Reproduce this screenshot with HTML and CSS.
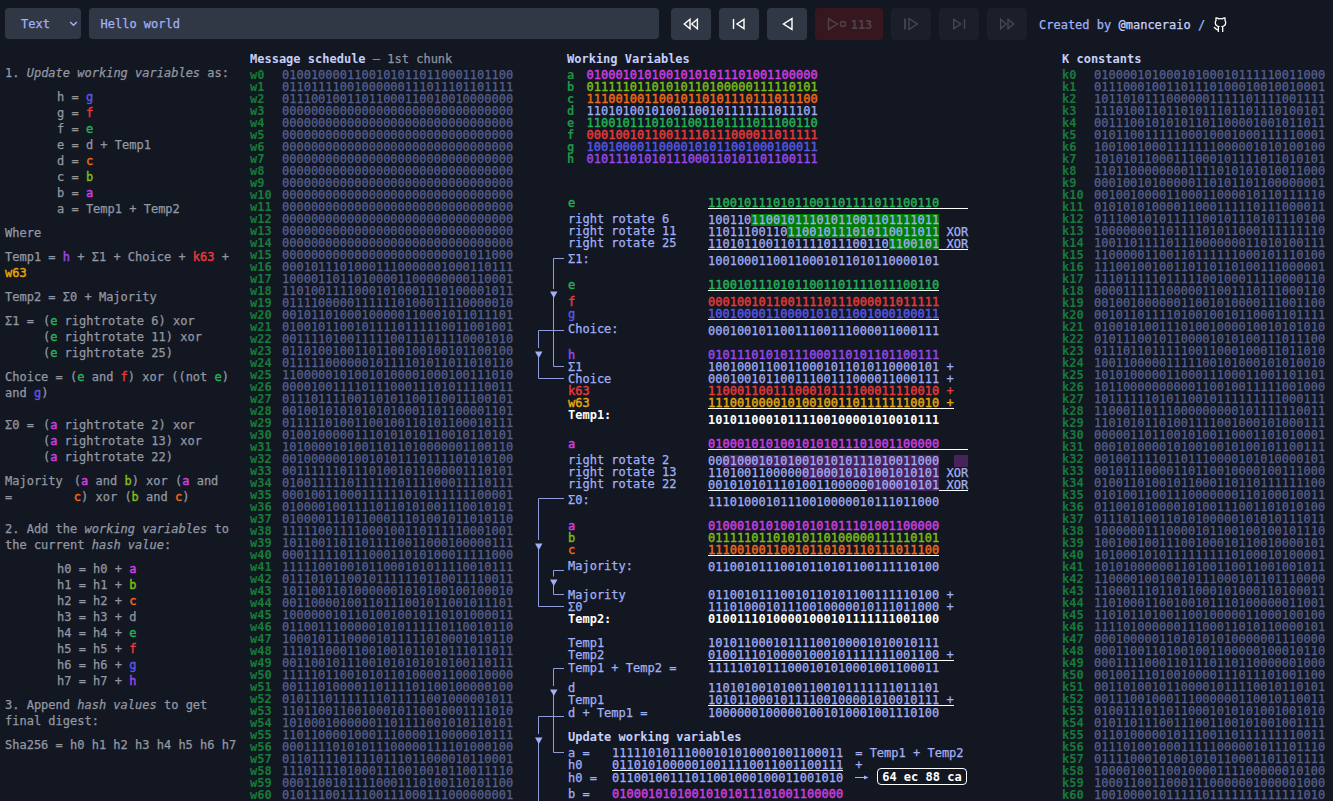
FILE: index.html
```html
<!DOCTYPE html>
<html lang="en">
<head>
<meta charset="utf-8">
<title>Sha256 Algorithm Explained</title>
<link rel="stylesheet" href="styles.css">
</head>
<body>
<header class="toolbar">
  <div class="select"><span>Text</span>
    <svg width="9" height="6" viewBox="0 0 9 6"><path d="M1.200 1l3.300 3.300L7.800 1"/></svg>
  </div>
  <div class="input">Hello world</div>
  <nav class="controls">
    <button class="btn"><svg width="16" height="14" viewBox="0 0 16 14"><path d="M7 2.300v9.400L1.300 7zM14.400 2.300v9.400L8.700 7z"/></svg></button>
    <button class="btn"><svg width="16" height="14" viewBox="0 0 16 14"><path d="M2.500 2v10M13 2.300v9.400L6 7z"/></svg></button>
    <button class="btn"><svg width="16" height="14" viewBox="0 0 16 14"><path d="M13 1.600v10.800L4.500 7z"/></svg></button>
    <button class="btn stop"><svg width="20" height="14" viewBox="0 0 20 14"><path d="M1.500 1.600v10.800L10.300 7z"/><circle cx="15.800" cy="7" r="2.500"/></svg><span>113</span></button>
    <button class="btn off"><svg width="16" height="14" viewBox="0 0 16 14"><path d="M2 1.500v11" stroke-width="1.800"/><path d="M6 1.600v10.800L14.200 7z"/></svg></button>
    <button class="btn off"><svg width="16" height="14" viewBox="0 0 16 14"><path d="M2.700 2.300v9.400l7-4.700zM13.500 2v10"/></svg></button>
    <button class="btn off"><svg width="16" height="14" viewBox="0 0 16 14"><path d="M1.700 2.300v9.400l5.500-4.700zM9 2.300v9.400l5.500-4.700z"/></svg></button>
  </nav>
  <div class="credit">Created by <b>@manceraio</b> / <svg width="15" height="15" viewBox="0 0 15 15"><path d="M5.300 15v-4.200c0-.5.200-.9.500-1.200C3.900 9.300 2.300 8.300 2.300 5.600c0-.9.300-1.600.8-2.200-.3-.8-.3-1.700 0-2.600 1 0 1.900.4 2.500 1a8.500 8.500 0 0 1 3.800 0c.6-.6 1.500-1 2.500-1 .3.900.3 1.800 0 2.600.5.600.8 1.300.8 2.200 0 2.700-1.600 3.700-3.500 4 .3.300.5.700.5 1.200V15M5.300 12.600c-2.300.6-2.400-.8-3.200-1.500-.4-.5-.8-.7-1.300-.8"/></svg></div>
</header>

<main class="board">
  <section class="notes">
    <p>1. <i>Update working variables</i> as:</p>
    <div class="indent">
      <div>h = <span class="g">g</span></div>
      <div>g = <span class="f">f</span></div>
      <div>f = <span class="e">e</span></div>
      <div>e = d + Temp1</div>
      <div>d = <span class="c">c</span></div>
      <div>c = <span class="b">b</span></div>
      <div>b = <span class="a">a</span></div>
      <div>a = Temp1 + Temp2</div>
    </div>
    <p>Where</p>
    <p>Temp1 = <span class="h">h</span> + Σ1 + Choice + <span class="f">k63</span> + <span class="w">w63</span></p>
    <p>Temp2 = Σ0 + Majority</p>
    <div class="formula"><span>Σ1 =</span>
      <div>(<span class="e">e</span> rightrotate 6) xor<br>(<span class="e">e</span> rightrotate 11) xor<br>(<span class="e">e</span> rightrotate 25)</div>
    </div>
    <p>Choice = (<span class="e">e</span> and <span class="f">f</span>) xor ((not <span class="e">e</span>) and <span class="g">g</span>)</p>
    <div class="formula spaced"><span>Σ0 =</span>
      <div>(<span class="a">a</span> rightrotate 2) xor<br>(<span class="a">a</span> rightrotate 13) xor<br>(<span class="a">a</span> rightrotate 22)</div>
    </div>
    <div class="formula majority"><span>Majority<br>=</span>
      <div>(<span class="a">a</span> and <span class="b">b</span>) xor (<span class="a">a</span> and<br><span class="c">c</span>) xor (<span class="b">b</span> and <span class="c">c</span>)</div>
    </div>
    <p class="step">2. Add the <i>working variables</i> to the current <i>hash value</i>:</p>
    <div class="indent">
      <div>h0 = h0 + <span class="a">a</span></div>
      <div>h1 = h1 + <span class="b">b</span></div>
      <div>h2 = h2 + <span class="c">c</span></div>
      <div>h3 = h3 + d</div>
      <div>h4 = h4 + <span class="e">e</span></div>
      <div>h5 = h5 + <span class="f">f</span></div>
      <div>h6 = h6 + <span class="g">g</span></div>
      <div>h7 = h7 + <span class="h">h</span></div>
    </div>
    <p>3. Append <i>hash values</i> to get final digest:</p>
    <p>Sha256 = h0 h1 h2 h3 h4 h5 h6 h7</p>
  </section>

  <section class="schedule">
    <h2>Message schedule <span>– 1st chunk</span></h2>
    <div id="schedule"></div>
  </section>

  <section class="work">
    <h2>Working Variables</h2>
    <div id="vars"></div>
    <div class="steps">
      <svg class="links" width="32" height="604" viewBox="0 0 32 604">
        <path class="line" d="M29 61.500H18.500V92M18.500 95V169.500H29"/>
        <path class="line" d="M29 133.500H3.500V151M3.500 155V181.500H29"/>
        <path class="line" d="M29 301.500H3.500V343M3.500 347V409.500H29"/>
        <path class="line" d="M29 373.500H18.500V379.500M18.500 383V397.500H29"/>
        <path class="line" d="M29 471.500H18.500V489M18.500 493V555.500H29"/>
        <path class="line" d="M29 519.500H3.500V537M3.500 541V604"/>
        <path d="M15 94.500h7.500l-3.700 6.500z"/>
        <path d="M0 154.500h7.500l-3.700 6.500z"/>
        <path d="M0 346.500h7.500l-3.700 6.500z"/>
        <path d="M15 382.500h7.500l-3.700 6.500z"/>
        <path d="M15 492.500h7.500l-3.700 6.500z"/>
        <path d="M0 540.500h7.500l-3.700 6.500z"/>
      </svg>
      <div class="calc">
        <div class="pair">
          <div class="labels" id="labels"></div>
          <div class="values" id="values"></div>
        </div>
        <h3>Update working variables</h3>
        <div class="update" id="update"></div>
      </div>
    </div>
  </section>

  <section class="constants">
    <h2>K constants</h2>
    <div id="constants"></div>
  </section>
</main>
<script src="script.js"></script>
</body>
</html>
```
FILE: styles.css
```css
* { box-sizing: border-box; }

body {
  margin: 0;
  height: 801px;
  overflow: hidden;
  background: #131722;
  color: #a2b0f6;
  font: 12px/12px "DejaVu Sans Mono", Menlo, monospace;
  -webkit-text-stroke: 0.25px currentColor;
}

/* toolbar */
.toolbar {
  display: flex;
  align-items: flex-start;
  height: 48px;
  padding: 8px 5px 0;
}
.select, .input {
  display: flex;
  align-items: center;
  height: 31px;
  border-radius: 4px;
  background: #303846;
}
.select {
  justify-content: space-between;
  width: 76px;
  margin-right: 8px;
  padding: 0 3px 0 16px;
}
.input { width: 570px; padding-left: 11.5px; }
.controls { display: flex; gap: 8px; margin-left: 12px; }
.btn {
  display: flex;
  align-items: center;
  justify-content: center;
  width: 40px;
  height: 32px;
  padding: 0;
  border: 0;
  border-radius: 4px;
  background: #303846;
  color: #fff;
  font: inherit;
}
.btn.off { background: #1a1f2a; color: #434852; }
.btn.stop { width: 68px; gap: 4px; padding-left: 1px; background: #36161f; color: #504249; font-weight: bold; }
.btn.stop span { padding-top: 1px; -webkit-text-stroke: 0; }
svg { fill: none; stroke: currentColor; stroke-width: 1.4; flex: none; }
.credit { display: flex; align-items: center; height: 34px; margin-left: 12px; white-space: pre; }
.credit b { font-weight: normal; color: #c7d2fb; }
.credit svg { margin: 0 0 2px 1px; color: #fff; stroke-width: 1.3; }

/* columns */
.board {
  display: grid;
  grid-template-columns: 245px 285px 527px 271px;
  height: 753px;
  padding-left: 5px;
  overflow: hidden;
}
h2, h3 { margin: 0; font: inherit; font-weight: bold; color: #c5cff9; -webkit-text-stroke: 0; }
h2 { height: 16px; margin-top: 5px; line-height: 12px; white-space: pre; }
h2 span { font-weight: normal; color: #8e939d; -webkit-text-stroke: 0.25px currentColor; }

/* notes */
.notes { width: 236px; padding-top: 17px; line-height: 16px; color: #9297a2; }
.notes p { margin: 0 0 8px; }
.indent { margin: 0 0 8px; padding-left: 52px; }
.formula { display: flex; gap: 9px; margin-bottom: 8px; white-space: nowrap; }
.formula.spaced { margin-top: 24px; }
.notes p + .formula.spaced { margin-top: 16px; }
.formula.majority { gap: 11px; }
.notes .step { margin-top: 16px; }

/* word tables */
.word { display: flex; height: 12px; white-space: pre; }
.word b { width: 32px; color: #177a39; -webkit-text-stroke: 0; }
.word span { color: #566190; }
.work .word b { width: 19.5px; color: #1a9642; }

.a, .word .a { color: #cf3fe3; }
.b, .word .b { color: #7dbd18; }
.c, .word .c { color: #f26a16; }
.word .d { color: #a2b0f6; }
.e, .word .e { color: #22b455; }
.f, .word .f { color: #e63b3b; }
.g, .word .g { color: #5957e6; }
.h, .word .h { color: #9a48ec; }
.w { color: #e6a80a; }
.a, .b, .c, .e, .f, .g, .h, .w { -webkit-text-stroke-width: 0.4px; }
.strong { color: #fff; font-weight: bold; -webkit-text-stroke: 0; }

/* calculation */
.work h2, #vars { margin-left: 32px; }
.steps { display: flex; margin-top: 32px; height: 604px; }
.links { width: 32px; height: 604px; margin-right: 1px; }
.links path { fill: #a2b0f6; stroke: none; }
.links .line { fill: none; stroke: #8f9cdc; stroke-width: 1; }
.pair { display: flex; }
.labels { width: 140px; }
.labels div, .values div { height: 12px; white-space: pre; }
.values div { width: max-content; min-width: 231px; }
.values .line, .update .line { border-bottom: 1px solid #fff; }
.values .wide { min-width: 260px; }
.hit-e, .hit-a { display: inline-block; height: 12px; }
.hit-e { background: #007c00; }
.hit-a { background: #482259; }
.after-1 { margin-top: 1px; }
.after-3 { margin-top: 3px; }
.after-4 { margin-top: 4px; }
.after-5 { margin-top: 5px; }
.after-8 { margin-top: 8px; }
.after-12 { margin-top: 12px; }
.after-14 { margin-top: 14px; }
.after-16 { margin-top: 16px; }
.after-17 { margin-top: 17px; }
h3 { margin: 12px 0 4px; height: 12px; }
.update > div { display: flex; height: 12px; white-space: pre; }
.update .name { width: 44px; }
.update .note { margin-left: 12px; }
.arrow { margin: 0 8px 0 12px; fill: #a2b0f6; stroke-width: 1; }
.badge {
  height: 17px;
  margin-top: -4px;
  padding: 2px 4px;
  border: 1px solid #fff;
  border-radius: 4px;
  color: #fff;
  font-weight: bold;
  -webkit-text-stroke: 0;
}
```
FILE: script.js
```js
const fractional = (n, root) => {
  // first 32 fractional bits of the root of n, in exact integer arithmetic
  const target = BigInt(n) << BigInt(32 * root);
  let lo = 0n, hi = 1n << 40n;
  while (lo < hi) {
    const mid = (lo + hi + 1n) >> 1n;
    if (mid ** BigInt(root) <= target) lo = mid; else hi = mid - 1n;
  }
  return Number(lo & 0xffffffffn);
};
const primes = [];
for (let n = 2; primes.length < 64; n++) if (primes.every(p => n % p)) primes.push(n);
const K = primes.map(p => fractional(p, 3));
const H = primes.slice(0, 8).map(p => fractional(p, 2));

const bin = n => (n >>> 0).toString(2).padStart(32, '0');
const rotr = (n, k) => ((n >>> k) | (n << (32 - k))) >>> 0;
const add = (...xs) => xs.reduce((s, x) => (s + x) >>> 0, 0);

const message = 'Hello world';
const bytes = new Uint8Array(64);
[...message].forEach((ch, i) => { bytes[i] = ch.charCodeAt(0); });
bytes[message.length] = 0x80;
bytes[63] = message.length * 8;
const W = [];
for (let i = 0; i < 16; i++) W.push(new DataView(bytes.buffer).getUint32(i * 4));
for (let i = 16; i < 64; i++) {
  const x = W[i - 15], y = W[i - 2];
  W.push(add(W[i - 16], rotr(x, 7) ^ rotr(x, 18) ^ (x >>> 3), W[i - 7], rotr(y, 17) ^ rotr(y, 19) ^ (y >>> 10)));
}

const round = ([a, b, c, d, e, f, g, h], i) => {
  const s1 = rotr(e, 6) ^ rotr(e, 11) ^ rotr(e, 25);
  const ch = (e & f) ^ (~e & g);
  const t1 = add(h, s1, ch, K[i], W[i]);
  const s0 = rotr(a, 2) ^ rotr(a, 13) ^ rotr(a, 22);
  const maj = (a & b) ^ (a & c) ^ (b & c);
  const t2 = add(s0, maj);
  return { s1, ch, t1, s0, maj, t2, next: [add(t1, t2), a, b, c, add(d, t1), e, f, g] };
};
let vars = H;
for (let i = 0; i < 63; i++) vars = round(vars, i).next;
const [a, b, c, d, e, f, g, h] = vars;
const r = round(vars, 63);

const put = (id, html) => { document.getElementById(id).innerHTML = html; };
const word = (name, value, cls = '') => `<div class="word"><b>${name}</b><span class="${cls}">${bin(value)}</span></div>`;
// rows below w60 / k60 fall outside the board
put('schedule', W.slice(0, 61).map((v, i) => word('w' + i, v)).join(''));
put('constants', K.slice(0, 61).map((v, i) => word('k' + i, v)).join(''));
put('vars', vars.map((v, i) => word('abcdefgh'[i], v, 'abcdefgh'[i])).join(''));

const line = ([html, cls = '']) => `<div class="${cls}">${html}</div>`;
const rot = (v, k, name) => bin(rotr(v, k)).slice(0, k) + `<span class="hit-${name}">${bin(rotr(v, k)).slice(k)}</span>`;

put('labels', [
  ['e', 'e'], ['right rotate 6', 'after-4'], ['right rotate 11'], ['right rotate 25'], ['Σ1:', 'after-4'],
  ['e', 'e after-14'], ['f', 'f after-5'], ['g', 'g'], ['Choice:', 'after-3'],
  ['h', 'h after-14'], ['Σ1'], ['Choice'], ['k63', 'f'], ['w63', 'w'], ['Temp1:', 'strong'],
  ['a', 'a after-17'], ['right rotate 2', 'after-4'], ['right rotate 13'], ['right rotate 22'], ['Σ0:', 'after-4'],
  ['a', 'a after-14'], ['b', 'b'], ['c', 'c'], ['Majority:', 'after-4'],
  ['Majority', 'after-17'], ['Σ0'], ['Temp2:', 'strong'],
  ['Temp1', 'after-12'], ['Temp2'], ['Temp1 + Temp2 =', 'after-1'],
  ['d', 'after-8'], ['Temp1'], ['d + Temp1 =', 'after-1'],
].map(line).join(''));

put('values', [
  [bin(e), 'e line wide'], [rot(e, 6, 'e'), 'after-5'], [rot(e, 11, 'e') + ' XOR'], [rot(e, 25, 'e') + ' XOR', 'line'], [bin(r.s1), 'after-5'],
  [bin(e), 'e line after-12'], [bin(f), 'f after-5'], [bin(g), 'g line'], [bin(r.ch), 'after-5'],
  [bin(h), 'h after-12'], [bin(r.s1) + ' +'], [bin(r.ch) + ' +'], [bin(K[63]) + ' +', 'f'], [bin(W[63]) + ' +', 'w line'], [bin(r.t1), 'strong after-5'],
  [bin(a), 'a line wide after-12'], [rot(a, 2, 'a') + '  <span class="hit-a">  </span>', 'after-5'], [rot(a, 13, 'a') + ' XOR'], [rot(a, 22, 'a') + ' XOR', 'line'], [bin(r.s0), 'after-5'],
  [bin(a), 'a after-12'], [bin(b), 'b'], [bin(c), 'c line'], [bin(r.maj), 'after-5'],
  [bin(r.maj) + ' +', 'after-16'], [bin(r.s0) + ' +'], [bin(r.t2), 'strong'],
  [bin(r.t1), 'after-12'], [bin(r.t2) + ' +', 'line'], [bin(r.next[0]), 'after-1'],
  [bin(d), 'after-8'], [bin(r.t1) + ' +', 'line'], [bin(r.next[4]), 'after-1'],
].map(line).join(''));

const digest = add(H[0], r.next[0]);
const hex = digest.toString(16).padStart(8, '0').match(/../g).join(' ');
const row = (name, bits, note, cls = '', bitCls = '') =>
  `<div class="${cls}"><span class="name">${name}</span><span class="${bitCls}">${bits}</span>${note}</div>`;
put('update',
  row('a =', bin(r.next[0]), '<span class="note">= Temp1 + Temp2</span>') +
  row('h0', bin(H[0]), '<span class="note">+</span>', '', 'line') +
  row('h0 =', bin(digest), `<svg class="arrow" width="14" height="12" viewBox="0 0 14 12"><path d="M0 5.500h10"/><path d="M9 3.500l4.500 2-4.500 2z" stroke="none"/></svg><span class="badge">${hex}</span>`, 'after-1') +
  row('b =', bin(a), '', 'after-4', 'a'));
```
